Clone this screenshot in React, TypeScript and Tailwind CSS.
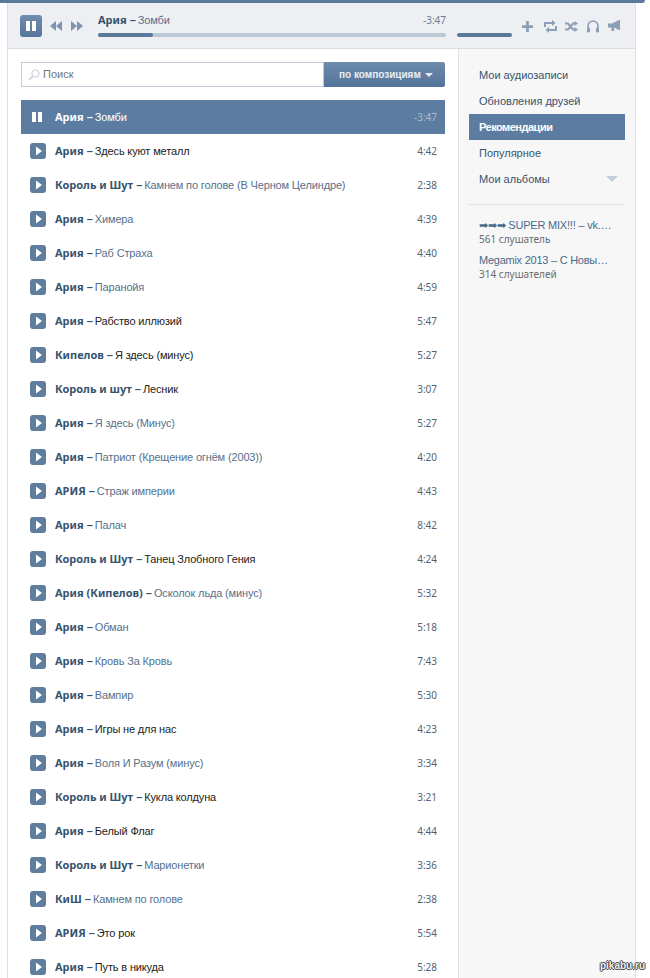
import React from 'react';

type Track = { artist: string; title: string; time: string; dark?: boolean };

const tracks: Track[] = [
  { artist: 'Ария', title: 'Здесь куют металл', time: '4:42', dark: true },
  { artist: 'Король и Шут', title: 'Камнем по голове (В Черном Целиндре)', time: '2:38' },
  { artist: 'Ария', title: 'Химера', time: '4:39' },
  { artist: 'Ария', title: 'Раб Страха', time: '4:40' },
  { artist: 'Ария', title: 'Паранойя', time: '4:59' },
  { artist: 'Ария', title: 'Рабство иллюзий', time: '5:47', dark: true },
  { artist: 'Кипелов', title: 'Я здесь (минус)', time: '5:27', dark: true },
  { artist: 'Король и шут', title: 'Лесник', time: '3:07', dark: true },
  { artist: 'Ария', title: 'Я здесь (Минус)', time: '5:27' },
  { artist: 'Ария', title: 'Патриот (Крещение огнём (2003))', time: '4:20' },
  { artist: 'АРИЯ', title: 'Страж империи', time: '4:43' },
  { artist: 'Ария', title: 'Палач', time: '8:42' },
  { artist: 'Король и Шут', title: 'Танец Злобного Гения', time: '4:24', dark: true },
  { artist: 'Ария (Кипелов)', title: 'Осколок льда (минус)', time: '5:32' },
  { artist: 'Ария', title: 'Обман', time: '5:18' },
  { artist: 'Ария', title: 'Кровь За Кровь', time: '7:43' },
  { artist: 'Ария', title: 'Вампир', time: '5:30' },
  { artist: 'Ария', title: 'Игры не для нас', time: '4:23', dark: true },
  { artist: 'Ария', title: 'Воля И Разум (минус)', time: '3:34' },
  { artist: 'Король и Шут', title: 'Кукла колдуна', time: '3:21', dark: true },
  { artist: 'Ария', title: 'Белый Флаг', time: '4:44', dark: true },
  { artist: 'Король и Шут', title: 'Марионетки', time: '3:36' },
  { artist: 'КиШ', title: 'Камнем по голове', time: '2:38' },
  { artist: 'АРИЯ', title: 'Это рок', time: '5:54', dark: true },
  { artist: 'Ария', title: 'Путь в никуда', time: '5:28', dark: true },
];

const menu = ['Мои аудиозаписи', 'Обновления друзей', 'Рекомендации', 'Популярное', 'Мои альбомы'];

const PlayButton = () => (
  <span className="flex h-4 w-4 shrink-0 items-center justify-center rounded-[3px] bg-[#5f7d9d]">
    <svg width="8" height="10" viewBox="0 0 8 10" className="ml-[1px]">
      <path d="M1 0.5 L7 5 L1 9.5 Z" fill="#ffffff" />
    </svg>
  </span>
);

const Dash = () => <b className="ml-[3px] mr-[2px]">–</b>;

const PlayerIcons = () => (
  <div className="ml-[10px] flex items-center gap-[9px]">
    <svg width="11" height="11" viewBox="0 0 12 12" fill="#8ba0b6" className="mr-[2px]">
      <path d="M4.5 0h3v4.5H12v3H7.500V12h-3V7.500H0v-3h4.500z" />
    </svg>
    <svg width="13" height="13" viewBox="0 0 13 13" fill="none" stroke="#8ba0b6" strokeWidth="2" className="mr-[-1px]">
      <path d="M1 7V3h8M12 6v4H4" />
      <path d="M8 0l3.500 3L8 6zM5 7l-3.500 3L5 13z" fill="#8ba0b6" stroke="none" />
    </svg>
    <svg width="13" height="11" viewBox="0 0 13 11" fill="none" stroke="#8ba0b6" strokeWidth="2">
      <path d="M0 2.500h3l5 6h2M0 8.500h3l5-6h2" />
      <path d="M9.500 0L13 2.500 9.500 5zM9.500 6L13 8.500 9.500 11z" fill="#8ba0b6" stroke="none" />
    </svg>
    <svg width="12" height="13" viewBox="0 0 12 13" fill="none" stroke="#8ba0b6" strokeWidth="1.600">
      <path d="M1 8V6a5 5 0 0 1 10 0v2" />
      <rect x="0" y="7.500" width="3" height="5" rx="1" fill="#8ba0b6" stroke="none" />
      <rect x="9" y="7.500" width="3" height="5" rx="1" fill="#8ba0b6" stroke="none" />
    </svg>
    <svg width="12" height="12" viewBox="0 0 12 12" fill="#8ba0b6">
      <path d="M0 3.500h4L11 0h1v10h-1L6 7.500V11H3.500V7.500H0z" />
    </svg>
  </div>
);

const Player = () => (
  <div className="flex h-[46px] border-b border-[#d8dde3] bg-[#edeff2] pl-[12px]">
    <button className="mt-[12px] flex h-[22px] w-[22px] shrink-0 items-center justify-center gap-[2px] rounded-[3px] bg-gradient-to-b from-[#6f8dae] to-[#55759a]">
      <span className="h-[10px] w-[4px] bg-white" />
      <span className="h-[10px] w-[4px] bg-white" />
    </button>
    <div className="ml-[8px] mt-[18px] flex h-[10px] gap-[9px]">
      <svg width="12" height="10" viewBox="0 0 12 10" fill="#7d95ae">
        <path d="M6 0v10L0 5zM12 0v10L6 5z" />
      </svg>
      <svg width="12" height="10" viewBox="0 0 12 10" fill="#7d95ae">
        <path d="M0 0v10l6-5zM6 0v10l6-5z" />
      </svg>
    </div>
    <div className="ml-[15px] w-[348px] pt-[9px]">
      <div className="flex h-[16px] items-center justify-between text-[11px] leading-none">
        <span className="text-[#36536f]">
          <b>Ария</b>
          <span className="font-['Liberation_Sans',sans-serif]">
            <Dash />
            <span className="tracking-[-0.15px] text-[#56708c]">Зомби</span>
          </span>
        </span>
        <span className="text-[10px] text-[#6b7f93]">-3:47</span>
      </div>
      <div className="mt-[5px] h-[4px] rounded-full bg-[#bcc8d4]">
        <div className="h-full w-[55px] rounded-full bg-[#5b7a9b]" />
      </div>
    </div>
    <div className="ml-[11px] flex items-start pt-[30px]">
      <div className="h-[4px] w-[55px] rounded-full bg-[#5b7a9b]" />
    </div>
    <div className="flex h-[46px] items-center">
      <PlayerIcons />
    </div>
  </div>
);

const SearchBar = () => (
  <div className="flex h-[25px] font-['Liberation_Sans',sans-serif]">
    <div className="flex flex-1 items-center gap-[3px] border border-[#c2ccd6] bg-white pl-[6px] text-[11px] text-[#757575]">
      <svg width="12" height="12" viewBox="0 0 12 12" fill="none" stroke="#d5dbe1" strokeWidth="1.500">
        <circle cx="7.500" cy="4.500" r="3.500" />
        <path d="M5 7L1 11" strokeWidth="2" />
      </svg>
      Поиск
    </div>
    <button className="flex w-[121px] items-center gap-[4px] rounded-r-[2px] bg-gradient-to-b from-[#6d8bab] to-[#54739a] pl-[15px] text-[10px] font-bold text-[#e8eef4]">
      по композициям
      <span className="h-0 w-0 border-x-[4px] border-t-[4px] border-x-transparent border-t-[#e8eef4]" />
    </button>
  </div>
);

const ActiveRow = () => (
  <div className="flex h-[34px] items-center bg-[#5c7da1] pl-[11px] pr-[8px] text-[11px] text-white">
    <span className="flex w-[23px] shrink-0 gap-[2px]">
      <span className="h-[10px] w-[4px] bg-white" />
      <span className="h-[10px] w-[4px] bg-white" />
    </span>
    <span className="flex-1">
      <b>Ария</b>
      <span className="font-['Liberation_Sans',sans-serif]">
        <Dash />
        <span className="tracking-[-0.15px]">Зомби</span>
      </span>
    </span>
    <span className="text-[10px] text-[#a9bccf]">-3:47</span>
  </div>
);

const TrackRow = ({ track }: { track: Track }) => (
  <div className="flex h-[34px] items-center pl-[9px] pr-[8px] text-[11px]">
    <PlayButton />
    <span className="ml-[9px] flex-1 truncate text-[#36536f]">
      <b>{track.artist}</b>
      <span className="font-['Liberation_Sans',sans-serif]">
        <Dash />
        <span className={track.dark ? 'tracking-[-0.15px] text-[#222222]' : 'tracking-[-0.15px] text-[#56708c]'}>{track.title}</span>
      </span>
    </span>
    <span className="text-[10px] text-[#55636f]">{track.time}</span>
  </div>
);

const Sidebar = () => (
  <div className="w-[177px] shrink-0 border-l border-[#dde1e6] bg-[#f7f7f7] px-[10px] pt-[13px] font-['Liberation_Sans',sans-serif] text-[11px]">
    {menu.map((item) => (
      <div
        key={item}
        className={
          item === 'Рекомендации'
            ? 'flex h-[26px] items-center bg-[#5c7da1] px-[10px] font-bold tracking-[-0.5px] text-white'
            : 'flex h-[26px] items-center justify-between px-[10px] text-[#36536f]'
        }
      >
        {item}
        {item === 'Мои альбомы' && (
          <span className="mr-[-3px] h-0 w-0 border-x-[6px] border-t-[6px] border-x-transparent border-t-[#c3ced9]" />
        )}
      </div>
    ))}
    <div className="mt-[12px] border-t border-[#dde1e6] pl-[10px] pt-[14px]">
      <div className="leading-[13px] tracking-[-0.2px] text-[#4a6a8b]">➡➡➡ SUPER MIX!!! – vk.…</div>
      <div className="mt-[1px] font-['Noto_Sans',sans-serif] text-[10px] leading-[13px] text-[#6b6b6b]">561 слушатель</div>
      <div className="mt-[8px] leading-[13px] tracking-[-0.25px] text-[#4a6a8b]">Megamix 2013 – С Новы…</div>
      <div className="mt-[1px] font-['Noto_Sans',sans-serif] text-[10px] leading-[13px] text-[#6b6b6b]">314 слушателей</div>
    </div>
  </div>
);

export default function App() {
  return (
    <div className="relative h-[978px] w-[650px] overflow-hidden bg-white font-['Noto_Sans',sans-serif]">
      <div className="h-[3px] w-[645px] rounded-br-[3px] bg-[#5b7a9b]" />
      <div className="ml-[7px] w-[629px] border-x border-[#dde1e6]">
        <Player />
        <div className="flex">
          <div className="w-[450px] shrink-0 bg-white px-[13px] pt-[13px]">
            <SearchBar />
            <div className="mt-[13px]">
              <ActiveRow />
              {tracks.map((track, index) => (
                <TrackRow key={index} track={track} />
              ))}
            </div>
          </div>
          <Sidebar />
        </div>
      </div>
      <div className="absolute bottom-[5px] right-[5px] font-['Liberation_Sans',sans-serif] text-[10px] font-bold text-[#eeeeee] [text-shadow:1px_0_0_#444444,-1px_0_0_#444444,0_1px_0_#444444,0_-1px_0_#444444]">
        pikabu.ru
      </div>
    </div>
  );
}
